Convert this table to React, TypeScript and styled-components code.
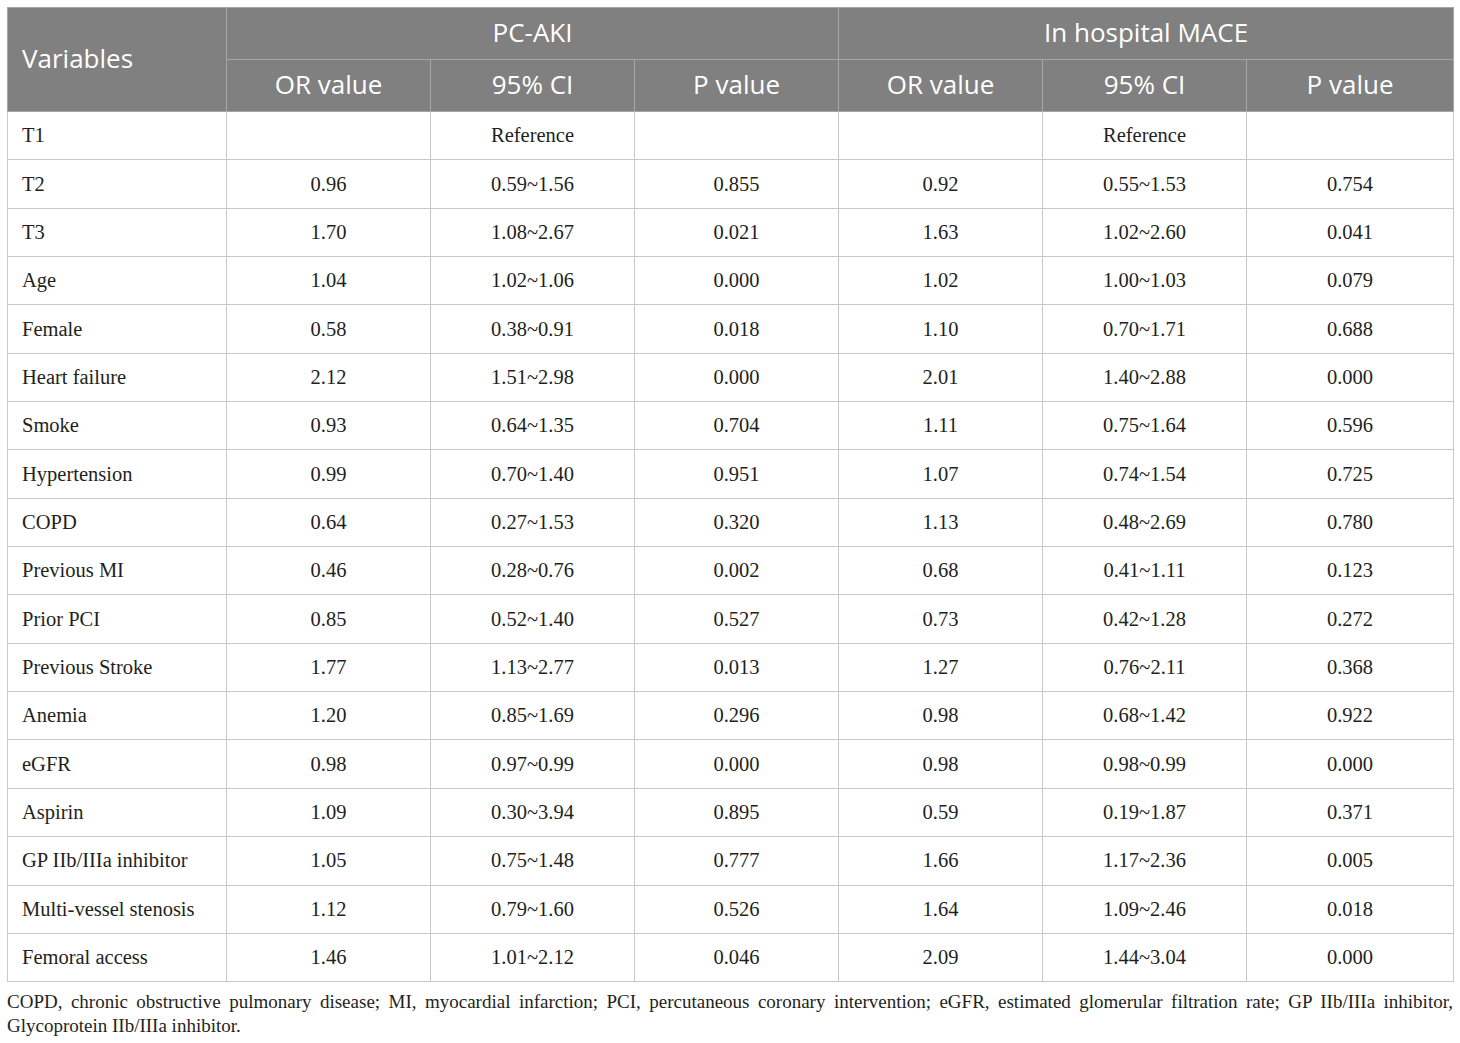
import React from "react";
import styled, { createGlobalStyle } from "styled-components";

const Global = createGlobalStyle`
  html, body { margin: 0; padding: 0; background: #fff; }
`;

const Page = styled.div`
  padding: 7px 7px 0 7px;
  width: 1446px;
`;

const Table = styled.table`
  border-collapse: collapse;
  width: 1446px;
  table-layout: fixed;
  border: 1px solid #c8c8c8;
`;

const HeadCell = styled.th<{ $left?: boolean }>`
  background: #808080;
  color: #fff;
  font-family: "Open Sans", "Noto Sans", sans-serif;
  font-weight: 400;
  font-size: 26px;
  height: 52px;
  padding: 0 14px 4px 14px;
  box-sizing: border-box;
  text-align: ${(p) => (p.$left ? "left" : "center")};
  border: 1px solid #a6a6a6;
  vertical-align: middle;
  line-height: 1;
`;

const Row = styled.tr`
  height: 48.35px;
`;

const Cell = styled.td<{ $left?: boolean }>`
  font-family: "Liberation Serif", "Times New Roman", serif;
  font-size: 20.5px;
  color: #231f20;
  padding: 0 14px;
  text-align: ${(p) => (p.$left ? "left" : "center")};
  border: 1px solid #c8c8c8;
  vertical-align: middle;
`;

const Note = styled.p`
  margin: 8px 0 0 0;
  font-family: "Liberation Serif", "Times New Roman", serif;
  font-size: 19px;
  line-height: 24px;
  color: #231f20;
  text-align: justify;
`;

type R = [string, string, string, string, string, string, string];

const rows: R[] = [
  ["T1", "", "Reference", "", "", "Reference", ""],
  ["T2", "0.96", "0.59~1.56", "0.855", "0.92", "0.55~1.53", "0.754"],
  ["T3", "1.70", "1.08~2.67", "0.021", "1.63", "1.02~2.60", "0.041"],
  ["Age", "1.04", "1.02~1.06", "0.000", "1.02", "1.00~1.03", "0.079"],
  ["Female", "0.58", "0.38~0.91", "0.018", "1.10", "0.70~1.71", "0.688"],
  ["Heart failure", "2.12", "1.51~2.98", "0.000", "2.01", "1.40~2.88", "0.000"],
  ["Smoke", "0.93", "0.64~1.35", "0.704", "1.11", "0.75~1.64", "0.596"],
  ["Hypertension", "0.99", "0.70~1.40", "0.951", "1.07", "0.74~1.54", "0.725"],
  ["COPD", "0.64", "0.27~1.53", "0.320", "1.13", "0.48~2.69", "0.780"],
  ["Previous MI", "0.46", "0.28~0.76", "0.002", "0.68", "0.41~1.11", "0.123"],
  ["Prior PCI", "0.85", "0.52~1.40", "0.527", "0.73", "0.42~1.28", "0.272"],
  ["Previous Stroke", "1.77", "1.13~2.77", "0.013", "1.27", "0.76~2.11", "0.368"],
  ["Anemia", "1.20", "0.85~1.69", "0.296", "0.98", "0.68~1.42", "0.922"],
  ["eGFR", "0.98", "0.97~0.99", "0.000", "0.98", "0.98~0.99", "0.000"],
  ["Aspirin", "1.09", "0.30~3.94", "0.895", "0.59", "0.19~1.87", "0.371"],
  ["GP IIb/IIIa inhibitor", "1.05", "0.75~1.48", "0.777", "1.66", "1.17~2.36", "0.005"],
  ["Multi-vessel stenosis", "1.12", "0.79~1.60", "0.526", "1.64", "1.09~2.46", "0.018"],
  ["Femoral access", "1.46", "1.01~2.12", "0.046", "2.09", "1.44~3.04", "0.000"],
];

const widths = [219, 204, 204, 204, 204, 204, 207];

export default function App() {
  return (
    <Page>
      <Global />
      <Table>
        <colgroup>
          {widths.map((w, i) => (
            <col key={i} style={{ width: w }} />
          ))}
        </colgroup>
        <thead>
          <tr>
            <HeadCell rowSpan={2} $left>
              Variables
            </HeadCell>
            <HeadCell colSpan={3}>PC-AKI</HeadCell>
            <HeadCell colSpan={3}>In hospital MACE</HeadCell>
          </tr>
          <tr>
            <HeadCell>OR value</HeadCell>
            <HeadCell>95% CI</HeadCell>
            <HeadCell>P value</HeadCell>
            <HeadCell>OR value</HeadCell>
            <HeadCell>95% CI</HeadCell>
            <HeadCell>P value</HeadCell>
          </tr>
        </thead>
        <tbody>
          {rows.map((r, i) => (
            <Row key={i}>
              {r.map((c, j) => (
                <Cell key={j} $left={j === 0}>
                  {c}
                </Cell>
              ))}
            </Row>
          ))}
        </tbody>
      </Table>
      <Note>
        COPD, chronic obstructive pulmonary disease; MI, myocardial infarction; PCI, percutaneous coronary
        intervention; eGFR, estimated glomerular filtration rate; GP IIb/IIIa inhibitor, Glycoprotein IIb/IIIa
        inhibitor.
      </Note>
    </Page>
  );
}
